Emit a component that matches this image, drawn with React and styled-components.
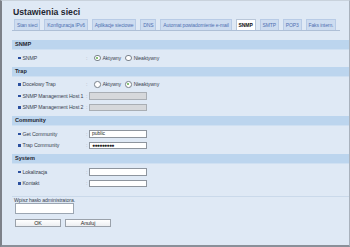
import React from "react";
import styled, { createGlobalStyle } from "styled-components";

const Global = createGlobalStyle`
  html, body { margin: 0; padding: 0; background: #dfe9f5; }
  body { font-family: "Liberation Sans", Arial, sans-serif; }
`;

const Frame = styled.div`
  width: 350px;
  height: 247px;
  box-sizing: border-box;
  background: #dfe9f5;
  border-left: 2px solid #7d8189;
  border-right: 1px solid #a9b2bd;
  border-bottom: 2px solid #8a9099;
  border-top: 1px solid #c9d2dc;
  padding: 0 0 0 10px;
  display: flex;
  flex-direction: column;
  overflow: hidden;
`;

const Title = styled.div`
  font-size: 8.7px;
  font-weight: bold;
  color: #1e2630;
  padding: 7px 0 0 1px;
  line-height: 9px;
  height: 9px;
`;

const TabBar = styled.div`
  display: flex;
  gap: 4px;
  margin-top: 2px;
  padding-left: 2px;
  width: 326px;
  border-bottom: 1px solid #aebfd6;
  align-items: flex-end;
`;

const Tab = styled.div`
  font-size: 5px;
  letter-spacing: -0.1px;
  line-height: 10px;
  height: 10px;
  padding: 0 1.9px;
  background: ${(p) => (p.$active ? "#ffffff" : "#cddcf0")};
  color: ${(p) => (p.$active ? "#111" : "#4f70b0")};
  font-weight: ${(p) => (p.$active ? "bold" : "normal")};
  border: 1px solid ${(p) => (p.$active ? "#b9c7d9" : "#b8cbe6")};
  border-bottom: none;
  white-space: nowrap;
`;

const Sections = styled.div`
  margin-top: 9px;
  display: flex;
  flex-direction: column;
`;

const SectionHeader = styled.div`
  height: 10px;
  box-sizing: border-box;
  line-height: 9px;
  background: #bcd5ee;
  border-bottom: 1px solid #cfe0f2;
  font-size: 5.6px;
  font-weight: bold;
  color: #1e2630;
  padding-left: 3px;
`;

const SectionBody = styled.div`
  display: flex;
  flex-direction: column;
  padding: 2px 0 3px 0;
`;

const Row = styled.div`
  display: flex;
  align-items: center;
  height: 11.5px;
`;

const Label = styled.div`
  width: 74px;
  box-sizing: border-box;
  padding-left: 6px;
  font-size: 5.2px;
  letter-spacing: -0.1px;
  color: #3a4350;
  display: flex;
  align-items: center;
  gap: 2px;
  white-space: nowrap;
`;

const Bullet = styled.span`
  width: 2.5px;
  height: 2.5px;
  background: #2b4f9e;
  display: inline-block;
`;

const Colon = styled.span`
  width: 3px;
  font-size: 5.5px;
  color: #9aa3ad;
`;

const RadioGroup = styled.div`
  display: flex;
  align-items: center;
  margin-left: 5px;
  gap: 2px;
`;

const RadioCircle = styled.span`
  width: 4.5px;
  height: 4.5px;
  border-radius: 50%;
  border: 0.8px solid #7a828c;
  background: #fff;
  display: inline-flex;
  align-items: center;
  justify-content: center;
  &::after {
    content: "";
    width: 2px;
    height: 2px;
    border-radius: 50%;
    background: ${(p) => (p.$checked ? "#5fae48" : "transparent")};
  }
`;

const RadioText = styled.span`
  font-size: 5.2px;
  letter-spacing: -0.1px;
  color: #3a4350;
  margin-right: 2px;
`;

const Input = styled.div`
  width: 58px;
  height: 7.5px;
  box-sizing: border-box;
  border: 1px solid ${(p) => (p.$disabled ? "#a9aeb4" : "#8e959e")};
  background: ${(p) => (p.$disabled ? "#d6d8db" : "#ffffff")};
  font-size: 5px;
  line-height: 5.5px;
  color: #222;
  padding-left: 2px;
  white-space: nowrap;
  overflow: hidden;
  ${(p) => (p.$password ? "letter-spacing: -0.6px;" : "")}
`;

const Separator = styled.div`
  width: 338px;
  height: 1px;
  background: #cad9ea;
  margin-top: 4px;
`;

const AdminLabel = styled.div`
  font-size: 5.2px;
  letter-spacing: -0.1px;
  color: #3a4350;
  margin: 0 0 0 2px;
  line-height: 6px;
  height: 6px;
`;

const AdminInput = styled.div`
  width: 59px;
  height: 11px;
  box-sizing: border-box;
  margin: 0 0 0 3px;
  border: 1px solid #9ca6b2;
  background: #fff;
`;

const Buttons = styled.div`
  display: flex;
  gap: 4px;
  margin: 5px 0 0 3px;
`;

const Button = styled.div`
  width: 46px;
  height: 8px;
  box-sizing: border-box;
  border: 1px solid #9aa1aa;
  background: linear-gradient(#ffffff, #eceef1);
  font-size: 5.3px;
  line-height: 6px;
  text-align: center;
  color: #222;
`;

function Radio({ checked, children }) {
  return (
    <>
      <RadioCircle $checked={checked} />
      <RadioText>{children}</RadioText>
    </>
  );
}

function Field({ label, children }) {
  return (
    <Row>
      <Label>
        <Bullet />
        {label}
      </Label>
      <Colon>:</Colon>
      {children}
    </Row>
  );
}

const tabs = [
  "Stan sieci",
  "Konfiguracja IPv6",
  "Aplikacje sieciowe",
  "DNS",
  "Automat powiadomienie e-mail",
  "SNMP",
  "SMTP",
  "POP3",
  "Faks intern.",
];

export default function App() {
  return (
    <>
      <Global />
      <Frame>
        <Title>Ustawienia sieci</Title>
        <TabBar>
          {tabs.map((t) => (
            <Tab key={t} $active={t === "SNMP"}>
              {t}
            </Tab>
          ))}
        </TabBar>
        <Sections>
          <SectionHeader>SNMP</SectionHeader>
          <SectionBody>
            <Field label="SNMP">
              <RadioGroup>
                <Radio checked>Aktywny</Radio>
                <Radio>Nieaktywny</Radio>
              </RadioGroup>
            </Field>
          </SectionBody>
          <SectionHeader>Trap</SectionHeader>
          <SectionBody>
            <Field label="Docelowy Trap">
              <RadioGroup>
                <Radio>Aktywny</Radio>
                <Radio checked>Nieaktywny</Radio>
              </RadioGroup>
            </Field>
            <Field label="SNMP Management Host 1">
              <Input $disabled />
            </Field>
            <Field label="SNMP Management Host 2">
              <Input $disabled />
            </Field>
          </SectionBody>
          <SectionHeader>Community</SectionHeader>
          <SectionBody>
            <Field label="Get Community">
              <Input>public</Input>
            </Field>
            <Field label="Trap Community">
              <Input $password>●●●●●●●●●</Input>
            </Field>
          </SectionBody>
          <SectionHeader>System</SectionHeader>
          <SectionBody>
            <Field label="Lokalizacja">
              <Input />
            </Field>
            <Field label="Kontakt">
              <Input />
            </Field>
          </SectionBody>
        </Sections>
        <Separator />
        <AdminLabel>Wpisz hasło administratora.</AdminLabel>
        <AdminInput />
        <Buttons>
          <Button>OK</Button>
          <Button>Anuluj</Button>
        </Buttons>
      </Frame>
    </>
  );
}
